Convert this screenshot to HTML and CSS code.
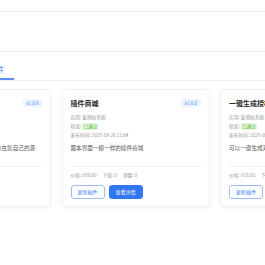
FILE: index.html
```html
<!DOCTYPE html>
<html lang="zh-CN">
<head>
<meta charset="utf-8">
<link rel="stylesheet" href="styles.css">
</head>
<body>
<div class="page">
  <div class="topbar"></div>
  <div class="header"></div>
  <div class="tabs">
    <div class="tab active">已购插件</div>
  </div>
  <div class="cards">
    <div class="card">
      <div class="card-head">
        <div class="title">授权对接插件</div>
        <span class="ver">v1.0.0</span>
      </div>
      <div class="info">应用: 爱授权系统</div>
      <div class="info">状态: <span class="ok">已通过</span></div>
      <div class="info">发布时间: 2025-09-20 10:12</div>
      <div class="desc">这是一键对接授权系统的插件，可以在您自己的源</div>
      <div class="stats"><span>价格: ¥29.00</span><span>下载: 0</span><span>销量: 0</span></div>
      <div class="actions"><button class="btn outline">更新插件</button><button class="btn primary">查看详情</button></div>
    </div>
    <div class="card">
      <div class="card-head">
        <div class="title">插件商城</div>
        <span class="ver">v1.0.0</span>
      </div>
      <div class="info">应用: 爱授权系统</div>
      <div class="info">状态: <span class="ok">已通过</span></div>
      <div class="info">发布时间: 2025-09-28 21:04</div>
      <div class="desc">跟本界面一模一样的插件商城</div>
      <div class="stats"><span>价格: ¥99.00</span><span>下载: 0</span><span>销量: 0</span></div>
      <div class="actions"><button class="btn outline">更新插件</button><button class="btn primary">查看详情</button></div>
    </div>
    <div class="card">
      <div class="card-head">
        <div class="title">一键生成授权码插件</div>
        <span class="ver">v1.0.0</span>
      </div>
      <div class="info">应用: 爱授权系统</div>
      <div class="info">状态: <span class="ok">已通过</span></div>
      <div class="info">发布时间: 2025-09-25 16:30</div>
      <div class="desc">可以一键生成对接代码</div>
      <div class="stats"><span>价格: ¥18.00</span><span>下载: 0</span><span>销量: 0</span></div>
      <div class="actions"><button class="btn outline">更新插件</button><button class="btn primary">查看详情</button></div>
    </div>
  </div>
</div>
</body>
</html>
```
FILE: styles.css
```css
html, body {
  margin: 0;
  padding: 0;
  background: #ffffff;
}
body {
  font-family: "Noto Sans CJK SC", "Noto Sans", sans-serif;
  width: 265px;
  height: 265px;
  overflow: hidden;
}
.page {
  width: 265px;
}
.topbar {
  height: 11px;
  border-bottom: 1px solid #f3f3f3;
}
.header {
  height: 39px;
  border-bottom: 1px solid #efefef;
}
.tabs {
  display: flex;
  height: 28px;
  border-bottom: 1px solid #eceef2;
  margin-left: -24px;
}
.tab {
  box-sizing: border-box;
  height: 28px;
  padding: 13px 10px 0 0;
  font-size: 7px;
  line-height: 9px;
  color: #3b7ef5;
  border-bottom: 2px solid #5b8ff7;
}
.cards {
  display: flex;
  gap: 10.5px;
  margin-top: 8px;
  margin-left: -97px;
}
.card {
  flex: 0 0 148px;
  box-sizing: border-box;
  width: 148px;
  height: 118px;
  padding: 8px 8px 7px;
  border: 1px solid #eef0f4;
  border-radius: 5px;
  background: #fff;
  box-shadow: 0 1px 4px rgba(0, 0, 0, 0.05);
  display: flex;
  flex-direction: column;
  overflow: hidden;
}
.card-head {
  display: flex;
  justify-content: space-between;
  align-items: center;
  height: 10px;
}
.title {
  font-size: 7px;
  line-height: 10px;
  font-weight: 700;
  color: #2b2b2b;
  white-space: nowrap;
}
.ver {
  font-size: 4.5px;
  line-height: 8px;
  height: 8px;
  padding: 0 3.5px;
  border-radius: 2px;
  background: #edf3fe;
  color: #4a86f2;
}
.info {
  font-size: 4.7px;
  line-height: 9.2px;
  color: #949494;
  white-space: nowrap;
}
.card-head + .info {
  margin-top: 4.5px;
}
.ok {
  display: inline-block;
  font-size: 4.7px;
  line-height: 7px;
  padding: 0 1px;
  border-radius: 1px;
  background: #e7f8df;
  color: #4cbb2c;
}
.desc {
  margin-top: 4px;
  height: 18px;
  font-size: 5.6px;
  line-height: 9px;
  color: #555;
  white-space: nowrap;
  border-bottom: 1px solid #f0f0f0;
  padding-bottom: 5px;
}
.stats {
  display: flex;
  gap: 6px;
  margin-top: 4px;
  font-size: 4.7px;
  line-height: 9px;
  color: #9c9c9c;
  white-space: nowrap;
}
.actions {
  display: flex;
  gap: 4px;
  margin-top: 5.5px;
}
.btn {
  box-sizing: border-box;
  width: 34px;
  height: 14px;
  padding: 0;
  border-radius: 3px;
  font-family: "Noto Sans CJK SC", "Noto Sans", sans-serif;
  font-size: 5px;
  line-height: 12px;
  cursor: pointer;
  flex: 0 0 auto;
}
.btn.outline {
  background: #fff;
  border: 1px solid #9fbdf5;
  color: #3b7ef5;
}
.btn.primary {
  background: #3376f2;
  border: 1px solid #3376f2;
  color: #fff;
}
```
